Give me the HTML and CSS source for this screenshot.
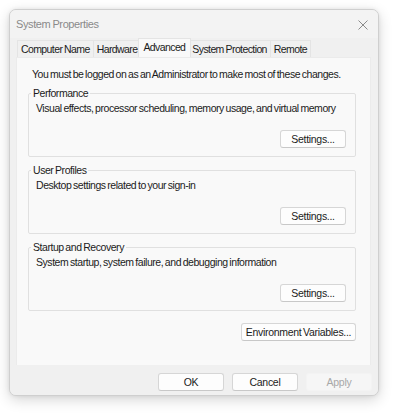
FILE: index.html
```html
<!DOCTYPE html>
<html>
<head>
<meta charset="utf-8">
<link rel="stylesheet" href="styles.css">
</head>
<body>
<div class="window">
  <div class="titlebar">
    <span class="title">System Properties</span>
    <svg class="close" width="10" height="10" viewBox="0 0 10 10"><path d="M0.5 0.5 L9.5 9.5 M9.5 0.5 L0.5 9.5" stroke="#8a8a8a" stroke-width="1" fill="none"/></svg>
  </div>
  <div class="tabs">
    <div class="tab">Computer Name</div>
    <div class="tab">Hardware</div>
    <div class="tab active">Advanced</div>
    <div class="tab">System Protection</div>
    <div class="tab">Remote</div>
  </div>
  <div class="panel">
    <p class="intro">You must be logged on as an Administrator to make most of these changes.</p>
    <fieldset class="group">
      <legend>Performance</legend>
      <p class="desc">Visual effects, processor scheduling, memory usage, and virtual memory</p>
      <div class="row"><button class="btn">Settings...</button></div>
    </fieldset>
    <fieldset class="group">
      <legend>User Profiles</legend>
      <p class="desc">Desktop settings related to your sign-in</p>
      <div class="row"><button class="btn">Settings...</button></div>
    </fieldset>
    <fieldset class="group">
      <legend>Startup and Recovery</legend>
      <p class="desc">System startup, system failure, and debugging information</p>
      <div class="row"><button class="btn">Settings...</button></div>
    </fieldset>
    <div class="envrow"><button class="btn env">Environment Variables...</button></div>
  </div>
  <div class="footer">
    <button class="btn foot">OK</button>
    <button class="btn foot">Cancel</button>
    <button class="btn foot disabled">Apply</button>
  </div>
</div>
</body>
</html>
```
FILE: styles.css
```css
* { box-sizing: border-box; }
html, body { margin: 0; padding: 0; background: #ffffff; }
body {
  font-family: "Liberation Sans", Arial, sans-serif;
  font-size: 10.5px;
  letter-spacing: -0.45px;
  word-spacing: -0.8px;
  color: #1b1b1b;
  padding: 9px 0 0 9px;
  width: 400px;
  height: 414px;
  overflow: hidden;
  white-space: nowrap;
}
.window {
  width: 370px;
  height: 387px;
  background: #f0f0f0;
  border: 1px solid #cfcfcf;
  border-radius: 7px;
  box-shadow: 0 4px 14px rgba(0,0,0,0.16), 0 0 4px rgba(0,0,0,0.08);
  display: flex;
  flex-direction: column;
  overflow: hidden;
}
.titlebar {
  height: 28px;
  display: flex;
  align-items: center;
  justify-content: space-between;
  padding: 0 10px 0 6px;
  background: #f3f3f3;
  flex-shrink: 0;
}
.title { color: #8a8a8a; font-size: 11px; letter-spacing: -0.4px; word-spacing: -0.5px; }
.close { margin-top: 1px; }
.tabs {
  display: flex;
  align-items: flex-end;
  padding-left: 7px;
  height: 19px;
  flex-shrink: 0;
}
.tab {
  height: 17px;
  padding: 0 3px;
  line-height: 16px;
  letter-spacing: -0.6px;
  word-spacing: -0.5px;
  border: 1px solid #e4e4e4;
  border-bottom: none;
  margin-right: -1px;
  background: #f0f0f0;
}
.tab:first-child { padding-left: 3px; }
.tab.active {
  height: 19px;
  line-height: 16px;
  background: #f9f9f9;
  border-color: #e4e4e4;
  padding: 0 5px 0 4px;
  margin-left: -2px;
  margin-right: -3px;
  position: relative;
  z-index: 1;
}
.panel {
  margin: 0 7px 0 6px;
  height: 308px;
  background: #f9f9f9;
  border: 1px solid #ebebeb;
  border-bottom: none;
  padding: 9px 14px 0 11px;
  display: flex;
  flex-direction: column;
  flex-shrink: 0;
}
.intro { margin: 0 0 5px 4px; line-height: 14px; }
.group {
  margin: 0 0 6px 0;
  padding: 0 0 8px 0;
  border: 1px solid #e0e0e0;
  border-radius: 2px;
  min-width: 0;
}
.group legend {
  padding: 0 2px;
  margin-left: 2px;
  line-height: 14px;
}
.desc { margin: 1px 0 0 7px; line-height: 14px; }
.row {
  display: flex;
  justify-content: flex-end;
  padding-right: 9px;
  margin-top: 15px;
}
.btn {
  font-family: "Liberation Sans", Arial, sans-serif;
  font-size: 10.5px;
  letter-spacing: -0.3px;
  word-spacing: -1px;
  color: #1b1b1b;
  background: #fdfdfd;
  border: 1px solid #d6d6d6;
  border-bottom-color: #c8c8c8;
  border-radius: 3px;
  height: 18px;
  width: 66px;
  padding: 0;
  line-height: 16px;
  white-space: nowrap;
}
.envrow { display: flex; justify-content: flex-end; margin-top: 6px; }
.btn.env { width: 115px; }
.footer {
  flex: 1;
  display: flex;
  justify-content: flex-end;
  align-items: center;
  padding: 3px 6px 0 0;
  gap: 8px;
  background: #f0f0f0;
}
.btn.foot { width: 66px; height: 18px; }
.btn.disabled {
  color: #a8a8a8;
  background: #f6f6f6;
  border-color: #f3f3f3;
}
```
